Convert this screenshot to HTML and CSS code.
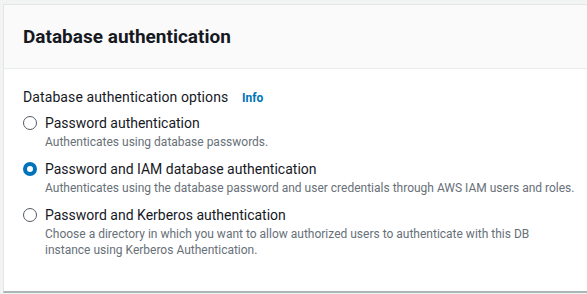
FILE: index.html
```html
<!doctype html>
<html>
<head>
    <meta charset="UTF-8">
    <title>Database authentication</title>
    <link rel="stylesheet" href="styles.css">
</head>
<body>
    <div class="panel">
        <div class="panel-head">
            <h2>Database authentication</h2>
        </div>
        <div class="panel-body">
            <div class="field-label">Database authentication options <a class="info" href="javascript:void(0);">Info</a></div>
            <ul class="radio-list">
                <li class="radio-item">
                    <span class="radio"></span>
                    <div class="radio-text">
                        <div class="radio-label">Password authentication</div>
                        <div class="radio-desc">Authenticates using database passwords.</div>
                    </div>
                </li>
                <li class="radio-item">
                    <span class="radio checked"></span>
                    <div class="radio-text">
                        <div class="radio-label">Password and IAM database authentication</div>
                        <div class="radio-desc">Authenticates using the database password and user credentials through AWS IAM users and roles.</div>
                    </div>
                </li>
                <li class="radio-item">
                    <span class="radio"></span>
                    <div class="radio-text">
                        <div class="radio-label">Password and Kerberos authentication</div>
                        <div class="radio-desc">Choose a directory in which you want to allow authorized users to authenticate with this DB instance using Kerberos Authentication.</div>
                    </div>
                </li>
            </ul>
        </div>
    </div>
</body>
</html>
```

FILE: styles.css
```css
/* reset */
body,h2,ul,li{margin:0;padding:0;}
ul{list-style:none;}
a{text-decoration:none;}
html,body{width:100%;height:100%;}
body{background:#f2f3f3; font:14px/20px Roboto, "Noto Sans", sans-serif; color:#16191f; overflow:hidden;}

/* panel */
.panel{margin:4px -20px 0 3px; height:289px; box-sizing:border-box; background:#fff; border:1px solid #e4e6e6; border-bottom:2px solid #aab7b8;}
.panel-head{height:64px; box-sizing:border-box; padding:0 19px; background:#fafafa; border-bottom:1px solid #eaeded; display:flex; align-items:center;}
.panel-head h2{font-size:19px; font-weight:700; line-height:22px;}
.panel-body{padding:18px 19px 0;}

.field-label{font-size:14px; line-height:20px; margin-bottom:5px; letter-spacing:0.1px;}
.info{color:#0073bb; font-size:12px; font-weight:700; margin-left:10px; letter-spacing:0;}

.radio-list{display:flex; flex-direction:column; gap:9px;}
.radio-item{display:flex; gap:8px; align-items:flex-start;}
.radio{flex:none; box-sizing:border-box; width:14px; height:14px; border:1px solid #545b64; border-radius:50%; margin-top:3px;}
.radio.checked{border:4px solid #0073bb;}
.radio-label{font-size:14px; line-height:20px;}
.radio-desc{font-size:12px; line-height:16px; color:#687078; margin-top:1px; max-width:532px;}
```
